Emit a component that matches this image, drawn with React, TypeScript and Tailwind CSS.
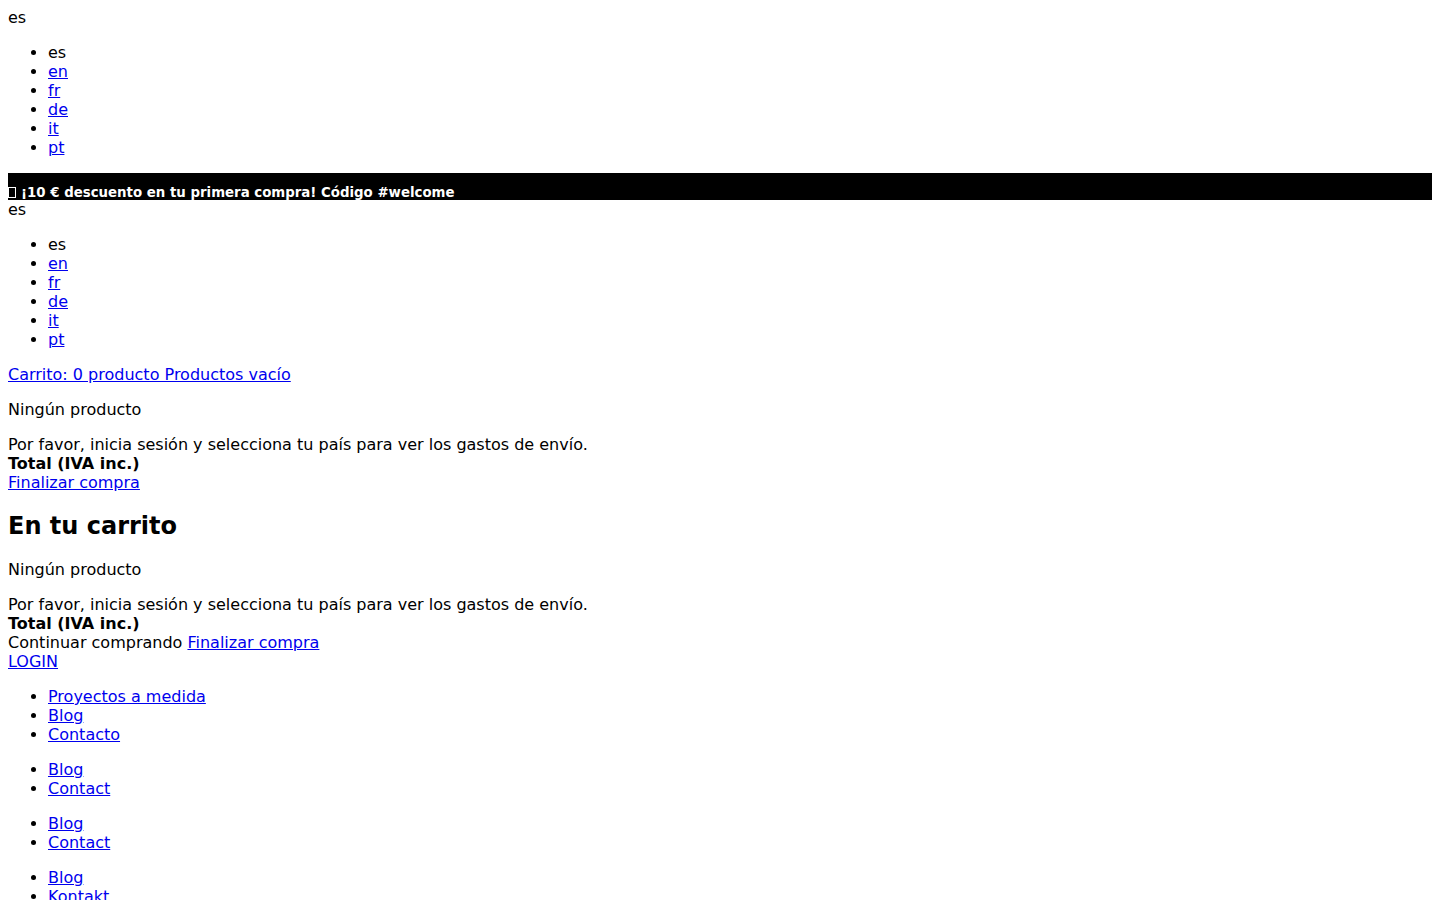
import React from 'react';

const langs = ['es', 'en', 'fr', 'de', 'it', 'pt'];

const footerMenus = [
  ['Proyectos a medida', 'Blog', 'Contacto'],
  ['Blog', 'Contact'],
  ['Blog', 'Contact'],
  ['Blog', 'Kontakt'],
];

function Link({ children }: { children: React.ReactNode }) {
  return (
    <a href="#" className="text-[#0000ee] underline">
      {children}
    </a>
  );
}

function LangSwitcher() {
  return (
    <div>
      <div>es</div>
      <ul className="my-4 list-disc pl-10">
        {langs.map((l) =>
          l === 'es' ? <li key={l}>{l}</li> : <li key={l}><Link>{l}</Link></li>
        )}
      </ul>
    </div>
  );
}

function CartSummary({ checkoutLine }: { checkoutLine: React.ReactNode }) {
  return (
    <>
      <p className="my-4">Ningún producto</p>
      <div>Por favor, inicia sesión y selecciona tu país para ver los gastos de envío.</div>
      <div className="font-bold">Total (IVA inc.)</div>
      <div>{checkoutLine}</div>
    </>
  );
}

export default function App() {
  return (
    <div className="bg-white p-2 font-['DejaVu_Sans','Liberation_Sans',sans-serif] text-base leading-[normal] text-black">
      <LangSwitcher />

      {/* promo banner */}
      <div className="flex h-[27px] items-end bg-black text-[13.33px] font-bold text-white">
        <span className="mb-[2px] mr-[5px] inline-block h-[11px] w-[8px] border border-white" />
        <span>¡10 € descuento en tu primera compra! Código #welcome</span>
      </div>

      <LangSwitcher />

      <div>
        <Link>Carrito: 0 producto Productos vacío</Link>
      </div>
      <CartSummary checkoutLine={<Link>Finalizar compra</Link>} />

      <h2 className="my-[20px] text-2xl leading-[normal] font-bold">En tu carrito</h2>
      <CartSummary
        checkoutLine={
          <>
            Continuar comprando <Link>Finalizar compra</Link>
          </>
        }
      />
      <div>
        <Link>LOGIN</Link>
      </div>

      {footerMenus.map((items, i) => (
        <ul key={i} className="my-4 list-disc pl-10">
          {items.map((item, j) => (
            <li key={j}>
              <Link>{item}</Link>
            </li>
          ))}
        </ul>
      ))}
    </div>
  );
}
